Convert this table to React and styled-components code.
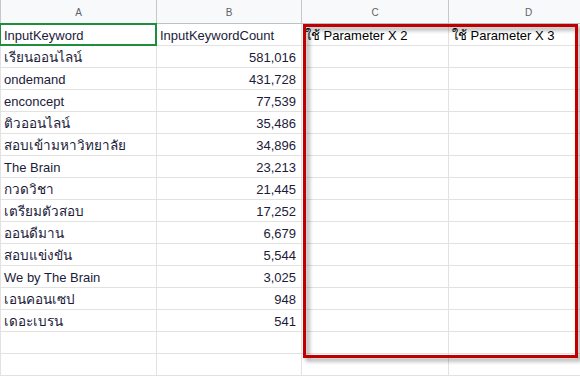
import React from "react";
import styled, { createGlobalStyle } from "styled-components";

const Global = createGlobalStyle`
  html, body { margin: 0; padding: 0; background: #fff; overflow: hidden; }
  body { font-family: "Liberation Sans", Arial, sans-serif; }
`;

const Sheet = styled.div`
  position: relative;
  width: 580px;
  height: 376px;
  overflow: hidden;
  background: #fff;
`;

const Grid = styled.div`
  display: grid;
  grid-template-columns: 1px 156px 145px 147px 160px;
  grid-template-rows: 24px;
  grid-auto-rows: 22px;
`;

const Corner = styled.div`
  background: #f8f9fa;
  border-right: 1px solid #c7c7c7;
  border-bottom: 1px solid #c0c0c0;
`;

const RowStub = styled.div`
  border-right: 1px solid #e2e2e2;
`;

const ColHead = styled.div`
  background: #f8f9fa;
  border-right: 1px solid #c7c7c7;
  border-bottom: 1px solid #c0c0c0;
  color: #5f6368;
  font-family: "Liberation Sans", Arial, sans-serif;
  font-size: 10px;
  display: flex;
  align-items: center;
  justify-content: center;
  padding-top: 1px;
`;

const Cell = styled.div`
  position: relative;
  border-right: 1px solid #e2e2e2;
  border-bottom: 1px solid #e2e2e2;
  color: ${(p) => (p.$plain ? "#000" : "#1b1b3a")};
  font-family: "Liberation Sans", Arial, sans-serif;
  font-size: ${(p) => (p.$thai ? "13.5px" : "13px")};
  line-height: 21px;
  padding: 1px ${(p) => (p.$right ? "5px" : "3px")} 0 3px;
  text-align: ${(p) => (p.$right ? "right" : "left")};
  white-space: nowrap;
  overflow: visible;
`;

const Selection = styled.div`
  position: absolute;
  left: -2px;
  top: -1px;
  right: -1px;
  bottom: -1px;
  border: 2px solid #1e8e3e;
  pointer-events: none;
`;

const Highlight = styled.div`
  position: absolute;
  left: 303px;
  top: 24px;
  width: 275px;
  height: 334px;
  box-sizing: border-box;
  border: 3px solid #c00000;
  filter: drop-shadow(3px 3px 2px rgba(0, 0, 0, 0.4));
  pointer-events: none;
`;

const rows = [
  ["เรียนออนไลน์", "581,016"],
  ["ondemand", "431,728"],
  ["enconcept", "77,539"],
  ["ติวออนไลน์", "35,486"],
  ["สอบเข้ามหาวิทยาลัย", "34,896"],
  ["The Brain", "23,213"],
  ["กวดวิชา", "21,445"],
  ["เตรียมตัวสอบ", "17,252"],
  ["ออนดีมาน", "6,679"],
  ["สอบแข่งขัน", "5,544"],
  ["We by The Brain", "3,025"],
  ["เอนคอนเซป", "948"],
  ["เดอะเบรน", "541"],
  ["", ""],
  ["", ""],
];

const isThai = (s) => /[\u0E00-\u0E7F]/.test(s);

export default function App() {
  return (
    <>
      <Global />
      <Sheet>
        <Grid>
          <Corner />
          {["A", "B", "C", "D"].map((c) => (
            <ColHead key={c}>{c}</ColHead>
          ))}
          <RowStub />
          <Cell>
            InputKeyword
            <Selection />
          </Cell>
          <Cell>InputKeywordCount</Cell>
          <Cell $plain>ใช้ Parameter X 2</Cell>
          <Cell $plain>ใช้ Parameter X 3</Cell>
          {rows.map(([k, v], i) => (
            <React.Fragment key={i}>
              <RowStub />
              <Cell $thai={isThai(k)}>{k}</Cell>
              <Cell $right>{v}</Cell>
              <Cell />
              <Cell />
            </React.Fragment>
          ))}
        </Grid>
        <Highlight />
      </Sheet>
    </>
  );
}
